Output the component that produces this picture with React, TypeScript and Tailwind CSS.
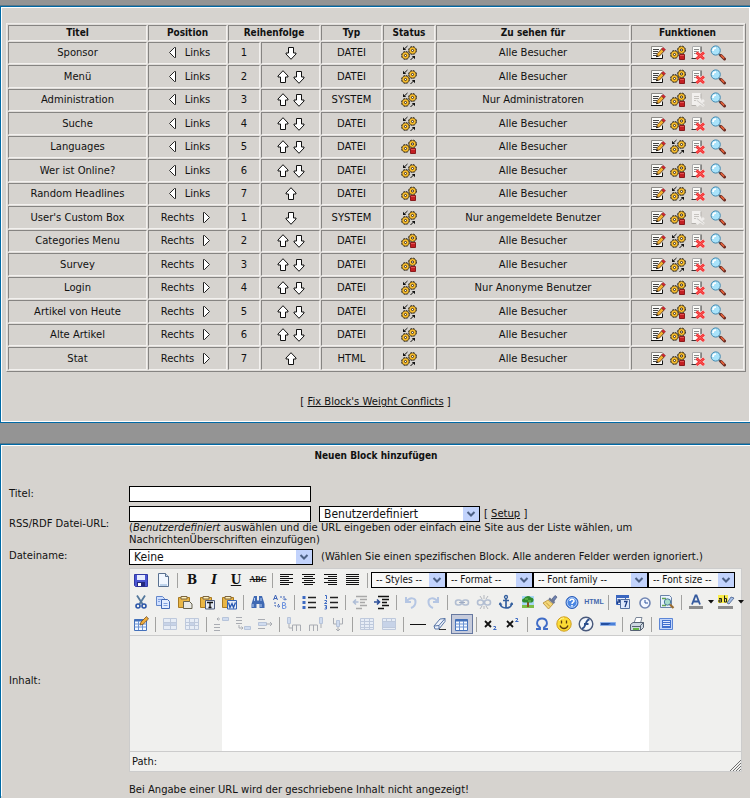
import type { ReactNode } from 'react';

type Block = {
  title: string;
  side: 'Links' | 'Rechts';
  weight: number;
  up: boolean;
  down: boolean;
  type: 'DATEI' | 'SYSTEM' | 'HTML';
  active: boolean;
  visibility: string;
};

const blocks: Block[] = [
  { title: 'Sponsor', side: 'Links', weight: 1, up: false, down: true, type: 'DATEI', active: true, visibility: 'Alle Besucher' },
  { title: 'Menü', side: 'Links', weight: 2, up: true, down: true, type: 'DATEI', active: true, visibility: 'Alle Besucher' },
  { title: 'Administration', side: 'Links', weight: 3, up: true, down: true, type: 'SYSTEM', active: true, visibility: 'Nur Administratoren' },
  { title: 'Suche', side: 'Links', weight: 4, up: true, down: true, type: 'DATEI', active: true, visibility: 'Alle Besucher' },
  { title: 'Languages', side: 'Links', weight: 5, up: true, down: true, type: 'DATEI', active: false, visibility: 'Alle Besucher' },
  { title: 'Wer ist Online?', side: 'Links', weight: 6, up: true, down: true, type: 'DATEI', active: true, visibility: 'Alle Besucher' },
  { title: 'Random Headlines', side: 'Links', weight: 7, up: true, down: false, type: 'DATEI', active: false, visibility: 'Alle Besucher' },
  { title: "User's Custom Box", side: 'Rechts', weight: 1, up: false, down: true, type: 'SYSTEM', active: true, visibility: 'Nur angemeldete Benutzer' },
  { title: 'Categories Menu', side: 'Rechts', weight: 2, up: true, down: true, type: 'DATEI', active: false, visibility: 'Alle Besucher' },
  { title: 'Survey', side: 'Rechts', weight: 3, up: true, down: true, type: 'DATEI', active: false, visibility: 'Alle Besucher' },
  { title: 'Login', side: 'Rechts', weight: 4, up: true, down: true, type: 'DATEI', active: true, visibility: 'Nur Anonyme Benutzer' },
  { title: 'Artikel von Heute', side: 'Rechts', weight: 5, up: true, down: true, type: 'DATEI', active: true, visibility: 'Alle Besucher' },
  { title: 'Alte Artikel', side: 'Rechts', weight: 6, up: true, down: true, type: 'DATEI', active: true, visibility: 'Alle Besucher' },
  { title: 'Stat', side: 'Rechts', weight: 7, up: true, down: false, type: 'HTML', active: true, visibility: 'Alle Besucher' },
];

const Icon = ({ children }: { children: ReactNode }) => (
  <svg viewBox="0 0 16 16" className="block h-4 w-4 shrink-0" fill="none" aria-hidden="true">
    {children}
  </svg>
);

/* ---------- Block list icons ---------- */

const Gear = ({ cx, cy }: { cx: number; cy: number }) => (
  <g transform={`translate(${cx} ${cy})`}>
    <circle r="3.9" stroke="#1f1a12" strokeWidth="1" strokeDasharray="2 1.060" />
    <circle r="3.5" fill="#ffc22e" stroke="#3b2d12" strokeWidth=".6" />
    <circle r="1.100" fill="#fff" stroke="#2a2013" strokeWidth=".9" />
  </g>
);

const GearsOn = () => (
  <Icon>
    <Gear cx={4.5} cy={10.500} />
    <Gear cx={11.5} cy={5.5} />
    <path d="M6.500 1 3.500 3.800" stroke="#111" />
    <path d="M2 5V1.800L5.200 5z" fill="#111" />
    <path d="m9.500 15 3-3" stroke="#111" />
    <path d="M14 11v3.200L10.800 11z" fill="#111" />
  </Icon>
);

const GearsOff = () => (
  <Icon>
    <Gear cx={4.5} cy={9.5} />
    <Gear cx={11.5} cy={5} />
    <path d="M9.500 9.500h5v5h-5z" fill="#c41f22" stroke="#8a1a1d" />
    <path d="M10 10.500h4" stroke="#e25252" />
  </Icon>
);

const ArrowUp = () => (
  <Icon>
    <path d="M8 1.7 13 7v1h-2.500v5.500h-5V8H3V7z" fill="#fff" stroke="#111" />
  </Icon>
);

const ArrowDown = () => (
  <Icon>
    <path d="M8 14.300 13 9V8h-2.500V2.500h-5V8H3v1z" fill="#fff" stroke="#111" />
  </Icon>
);

const TriangleLeft = () => (
  <Icon>
    <path d="M10.500 2.500v10h-1l-5-5 5-5z" fill="#fff" stroke="#222" />
  </Icon>
);

const TriangleRight = () => (
  <Icon>
    <path d="M5.500 2.500v10h1l5-5-5-5z" fill="#fff" stroke="#222" />
  </Icon>
);

const EditIcon = () => (
  <Icon>
    <path d="M2 2h10v11H2z" fill="#fbfbf8" />
    <path d="M1.500 13.500v-12h11" stroke="#8d8b87" />
    <path d="M1 13.500h11.500v-4" stroke="#111" />
    <path d="M3 4.500h6M3 6.500h5M3 8.500h4M3 10.500h3" stroke="#444" />
    <path d="m6.500 11.500.7-2.800L11.500 4l2.500 2.200L9.500 11z" fill="#f4b32f" stroke="#4b2813" strokeWidth=".8" />
    <path d="m11.500 4 1.500-1.600 2.500 2.200-1.500 1.600z" fill="#d6252e" stroke="#7e1a1c" strokeWidth=".5" />
    <path d="m6 12.200.6-2.200 1.600 1.500z" fill="#111" />
  </Icon>
);

const DeleteIcon = () => (
  <Icon>
    <path d="M2 1h9v12H2z" fill="#fbfbf8" />
    <path d="M2.500 13V1.500h8" stroke="#aaa" />
    <path d="M11 1.500v6M1.500 13.500h6" stroke="#333" />
    <path d="M4 4.500h5M4 6.500h5M4 8.500h3" stroke="#888" />
    <path d="m6.500 7.500 7.500 6.500M14 7.500 6.500 14" stroke="#fbd9d7" strokeWidth="3.800" />
    <path d="m6.500 7.500 7.500 6.500M14 7.500 6.500 14" stroke="#f0292b" strokeWidth="2.800" />
    <path d="m7 8 6.500 5.500M13.500 8 7 13.500" stroke="#ff7a75" strokeWidth=".7" />
  </Icon>
);

const DeleteDisabledIcon = () => (
  <Icon>
    <path d="M2 1h9v12H2z" fill="#f2f0ee" />
    <path d="M4 4.500h5M4 6.500h5M4 8.500h3" stroke="#c6c3bf" />
    <path d="M1.500 13.500h6M11 1.500v5" stroke="#b3b0ac" />
    <path d="m6.500 8 7.500 6M14 8l-7.500 6" stroke="#efedeb" strokeWidth="2.800" />
    <path d="m7 8.500 6.500 5" stroke="#c2bfbb" strokeWidth=".8" />
  </Icon>
);

const ViewIcon = () => (
  <Icon>
    <path d="m9 9 2 2" stroke="#555" strokeWidth="2" />
    <path d="m11 10.500 3.500 3.500" stroke="#6a2a20" strokeWidth="3" strokeLinecap="round" />
    <path d="m11 10.200 3.200 3.200" stroke="#e8623a" strokeWidth="1.600" />
    <circle cx="5.700" cy="5.500" r="4.600" fill="#a9e3fa" stroke="#4389b1" />
    <path d="M3 6a3 3 0 0 1 3-3" stroke="#fff" strokeWidth="1.600" />
  </Icon>
);

/* ---------- Editor toolbar icons ---------- */

const SaveIcon = () => (
  <Icon>
    <path d="M1.500 2.500h13v12h-12l-1-1z" fill="#4a55d2" stroke="#3038a4" />
    <path d="M4 3h8v5H4z" fill="#e6ecff" />
    <path d="M4 10h8v4.500H4z" fill="#24297c" />
    <path d="M5 11h3v3H5z" fill="#fff" />
  </Icon>
);

const PageIcon = () => (
  <Icon>
    <path d="M3.500 1.500h7l3 3v10h-10z" fill="#f1f7ff" stroke="#5a7190" />
    <path d="M10.500 1.500v3h3" fill="#c5d9ee" stroke="#5a7190" />
    <path d="M5 13h7" stroke="#bdd3ec" strokeWidth="2" />
  </Icon>
);

const AlignIcon = ({ d }: { d: string }) => (
  <Icon>
    <path d={d} stroke="#111" />
  </Icon>
);

const CutIcon = () => (
  <Icon>
    <path d="M4 1.500 9.500 10M12 1.500 6.500 10" stroke="#54789c" strokeWidth="1.800" />
    <circle cx="5" cy="12" r="2" stroke="#2b55a8" strokeWidth="1.600" />
    <circle cx="11" cy="12" r="2" stroke="#2b55a8" strokeWidth="1.600" />
  </Icon>
);

const CopyIcon = () => (
  <Icon>
    <path d="M1.500 2.500h6l2 2v7h-8z" fill="#cfdfff" stroke="#6386ca" />
    <path d="M6.500 5.500h6l2 2v7h-8z" fill="#e2ecff" stroke="#4067b4" />
    <path d="M3 5.500h3M3 7.500h2M8.500 9.500h4M8.500 11.500h4" stroke="#7fa1e0" />
  </Icon>
);

const PasteIcon = ({ children }: { children?: ReactNode }) => (
  <Icon>
    <path d="M1.500 3.500h11v10h-11z" fill="#e9b646" stroke="#a87a22" />
    <path d="M4 2.500h6v2.500H4z" fill="#fff1ba" stroke="#7c6540" />
    {children}
  </Icon>
);

const FindIcon = () => (
  <Icon>
    <path d="M4 2h3v4l1 1 1-1V2h3l2.500 8v4H9.500v-4h-3v4h-5v-4z" fill="#3f69b3" />
    <path d="M4.500 4v3M11 4v3M3 10v3M11 10v3" stroke="#b6cff4" />
  </Icon>
);

const ReplaceIcon = () => (
  <Icon>
    <path d="m1.500 6 2-5 2 5M2 4.500h3" stroke="#3f65b8" />
    <path d="M10.500 8.500v6h2a1.500 1.500 0 0 0 0-3h-2 1.500a1.500 1.500 0 0 0 0-3z" stroke="#6d93df" />
    <path d="M8 3h5v3M11 4.500l2 2 2-2" stroke="#3f65b8" strokeDasharray="2 1" />
    <path d="M3 8v4h5M6 10l2 2-2 2" stroke="#3f65b8" strokeDasharray="2 1" />
  </Icon>
);

const BulletIcon = () => (
  <Icon>
    <path d="M1.500 2h3v3h-3zM1.500 7h3v3h-3zM1.500 12h3v3h-3z" fill="#3d6ac2" />
    <path d="M7 3.500h8M7 8.500h8M7 13.500h8" stroke="#222" strokeWidth="1.400" />
  </Icon>
);

const NumberIcon = () => (
  <Icon>
    <path d="M2 1.500h1.500V5M1.500 6.500h2v1.500l-2 1.500h2.500M1.500 11.500h2V15h-2M2 13.200h1.500" stroke="#3d6ac2" />
    <path d="M7 3.500h8M7 8.500h8M7 13.500h8" stroke="#222" strokeWidth="1.400" />
  </Icon>
);

const IndentIcon = ({ right }: { right?: boolean }) => (
  <Icon>
    <path d="M4 2.500h11M8 5.500h7M8 8.500h5M8 11.500h7M4 14.500h6" stroke={right ? '#111' : '#a8a8a8'} strokeWidth="1.500" />
    {right ? (
      <path d="M0 8h5M3 5.500 5.500 8 3 10.500" stroke="#2c4f99" strokeWidth="1.600" />
    ) : (
      <path d="M6.500 8h-5M4 5.500 1.500 8 4 10.500" stroke="#aebdd6" strokeWidth="1.600" />
    )}
  </Icon>
);

const UndoIcon = () => (
  <Icon>
    <path d="M3 3v5h5M3.500 7.500C7 2.500 13 4 12.500 8c0 3-2 5-4.500 6" stroke="#b5c6e3" strokeWidth="2" />
  </Icon>
);

const RedoIcon = () => (
  <Icon>
    <path d="M13 3v5H8M12.500 7.500C9 2.500 3 4 3.500 8c0 3 2 5 4.500 6" stroke="#b5c6e3" strokeWidth="2" />
  </Icon>
);

const LinkIcon = ({ broken }: { broken?: boolean }) => (
  <Icon>
    <rect x="1.500" y="6" width="6" height="5" rx="2.500" stroke="#b2bed2" strokeWidth="1.600" />
    <rect x="8.500" y="6" width="6" height="5" rx="2.500" stroke="#b2bed2" strokeWidth="1.600" />
    {broken ? (
      <path d="M8 1v4M8 12v3M4 2l2 3M12 2l-2 3M4 15l2-3M12 15l-2-3" stroke="#b2b6bd" />
    ) : (
      <path d="M5 8.500h6" stroke="#9fabc2" />
    )}
  </Icon>
);

const AnchorIcon = () => (
  <Icon>
    <circle cx="8" cy="3" r="1.500" stroke="#35609f" strokeWidth="1.300" />
    <path d="M8 4.500V14M5 6.500h6M2 9c.5 3.500 3 5 6 5s5.500-1.500 6-5" stroke="#35609f" strokeWidth="1.700" />
    <path d="M.8 11 2 8l2.500 2.500zM15.200 11 14 8l-2.500 2.500z" fill="#35609f" />
  </Icon>
);

const ImageIcon = () => (
  <Icon>
    <path d="M2 2h12v12H2z" fill="#a9d6f5" />
    <path d="M2 11h12v3H2z" fill="#7cbd45" />
    <path d="M7 8h2v5H7z" fill="#8a4f20" />
    <path d="M4 8.500a2 2 0 0 1 0-4 4 3.500 0 0 1 7-1 2.600 2.600 0 0 1 1 5z" fill="#2f8a2e" />
    <path d="M5 5h3M8 7h3" stroke="#79c850" />
  </Icon>
);

const CleanupIcon = () => (
  <Icon>
    <path d="m10 5 3-3.500 2 1.500-3 4z" fill="#6b7fae" stroke="#4f5a80" strokeWidth=".7" />
    <path d="m6 6 5 4-4.500 5L1 9z" fill="#f4d879" stroke="#b38a32" strokeWidth=".8" />
    <path d="m7 4.500 5.500 4.500" stroke="#6c7690" strokeWidth="2.400" />
    <path d="m4 8.500 4 4" stroke="#c99b36" />
  </Icon>
);

const HelpIcon = () => (
  <Icon>
    <circle cx="8" cy="8.500" r="6" fill="#4a87e3" stroke="#2b5cb6" />
    <circle cx="8" cy="8.500" r="4.800" stroke="#c9defc" strokeWidth=".8" />
    <path d="M6 7c0-2.500 4-2.500 4 0 0 1.300-2 1.200-2 3M8 11v1.500" stroke="#fff" strokeWidth="1.500" />
  </Icon>
);

const DateIcon = () => (
  <Icon>
    <path d="M1.500 1.500h9v9h-9z" fill="#e9f0ff" stroke="#3a66bf" />
    <path d="M1 1h13v3H1z" fill="#3a66bf" />
    <path d="M5.500 5.500h9v9h-9z" fill="#dfe9fb" stroke="#55709f" />
    <path d="M9 7.500h3L10 13M2.500 6h2v2h-2v2" stroke="#1c3d86" strokeWidth="1.300" />
  </Icon>
);

const TimeIcon = () => (
  <Icon>
    <circle cx="8" cy="9" r="5" fill="#f3f7ff" stroke="#7186b3" strokeWidth="1.600" />
    <path d="M8 6v3h3" stroke="#2e559f" />
  </Icon>
);

const PreviewIcon = () => (
  <Icon>
    <path d="M1.500 1.500h9l2 2v10h-11z" fill="#e9f2ff" stroke="#6a83a8" />
    <path d="M3 4.500h4M3 11.500h4" stroke="#63a552" strokeWidth="1.500" />
    <circle cx="8.500" cy="8" r="3.200" fill="#a6dccb" stroke="#47779a" />
    <path d="m11 10.500 3.500 3.500" stroke="#9a6b2d" strokeWidth="2.200" />
  </Icon>
);

const ForeColorIcon = () => (
  <Icon>
    <path d="M4 10.500 7.500 1.500h1L12 10.500M5.500 7.500h5" stroke="#355a9e" strokeWidth="1.800" />
    <path d="M1 12h14v3H1z" fill="#8c8c8c" />
  </Icon>
);

const BackColorIcon = () => (
  <svg viewBox="0 0 18 16" className="block h-4 w-[18px] shrink-0" fill="none" aria-hidden="true">
    <path d="M1 1h10v8H1z" fill="#f9ec4a" />
    <path d="M2 4.500h2.500V8H2V6h2M7.500 1.500V8h2V4.500h-2" stroke="#222" />
    <path d="m10 9 4-6 3 1-5 6z" fill="#a7c0e6" stroke="#47608e" strokeWidth=".8" />
    <path d="M1 12h15v3H1z" fill="#8c8c8c" />
  </svg>
);

const TableIcon = ({ pencil }: { pencil?: boolean }) => (
  <Icon>
    <path d="M1.500 3.500h12v11h-12z" fill="#f5f9ff" stroke="#4370ba" />
    <path d="M1.500 4.500h12" stroke="#4370ba" strokeWidth="2" />
    <path d="M1.500 8h12M1.500 11h12M5.500 5v9M9.500 5v9" stroke="#6b93d4" />
    {pencil && <path d="m7 9 1-3 5.500-5.500L15.500 3 10 8.300z" fill="#efac3a" stroke="#765023" strokeWidth=".8" />}
  </Icon>
);

const FadedTableIcon = ({ d, fill }: { d: string; fill?: string }) => (
  <Icon>
    <path d="M1.500 2.500h13v11h-13z" fill="#e7edf6" stroke="#bec9dc" />
    {fill && <path d={fill} fill="#c7d3e8" />}
    <path d={d} stroke="#bec9dc" />
  </Icon>
);

const FadedIcon = ({ box, line }: { box: string; line: string }) => (
  <Icon>
    <path d={box} fill="#d0dcef" stroke="#b7c4da" />
    <path d={line} stroke="#a9acb2" />
  </Icon>
);

const RuleIcon = () => (
  <Icon>
    <path d="M0 8.500h16" stroke="#111" />
  </Icon>
);

const EraserIcon = () => (
  <Icon>
    <path d="m2 10 6-7 5-.5v3L7 13H3z" fill="#eef3fb" stroke="#5875a6" />
    <path d="m2 10 5-.5 6-7M7 9.500V13" stroke="#5875a6" />
    <path d="M7 13.500h7" stroke="#333" />
  </Icon>
);

const ScriptIcon = ({ sup }: { sup?: boolean }) => (
  <Icon>
    <path d="m2 5 6 6M8 5l-6 6" stroke="#111" strokeWidth="1.800" />
    <path d={sup ? 'M10.500 2.500h2v1.500l-2 1.500h3' : 'M10.500 10.500h2v1.500l-2 1.500h3'} stroke="#3d6ac2" />
  </Icon>
);

const OmegaIcon = () => (
  <Icon>
    <path d="M2 13h4v-1.500C1 8.500 3 2.500 8 2.500s7 6 2 9V13h4" stroke="#3f6cc7" strokeWidth="1.900" />
  </Icon>
);

const SmileIcon = () => (
  <Icon>
    <circle cx="8" cy="8" r="7.200" fill="#fbdc35" stroke="#cf9d1e" />
    <path d="M5.500 4.500v3M10.500 4.500v3M4 9.500c1.500 4 6.500 4 8 0" stroke="#5b3b0d" strokeWidth="1.300" />
    <path d="M3 5c1-2 3-3 5-3" stroke="#fff5a4" />
  </Icon>
);

const FlashIcon = () => (
  <Icon>
    <circle cx="8" cy="8" r="6.800" fill="#f3f6fb" stroke="#49597b" strokeWidth="1.400" />
    <path d="M11.500 3.500C7 3.500 8 12.500 4 12.500M6 8h4.500" stroke="#2b4f8e" strokeWidth="1.800" />
  </Icon>
);

const AdvRuleIcon = () => (
  <Icon>
    <path d="M.5 6.500h15v3H.5z" fill="#4a80d8" stroke="#8aaee8" />
    <path d="M1 9h7l3-2H1z" fill="#244f9f" />
  </Icon>
);

const PrintIcon = () => (
  <Icon>
    <path d="m5 7 2-5.500h6L11.500 7z" fill="#fff" stroke="#7b8798" />
    <path d="m1.500 8.500 2.500-2h10.500v5l-3 3h-10z" fill="#cdd7e1" stroke="#566273" />
    <path d="M3 10.500h8M11.500 14V9.500l3-3" stroke="#566273" />
    <path d="M4 12h6v2H4z" fill="#64b845" />
  </Icon>
);

const FullscreenIcon = () => (
  <Icon>
    <path d="M1.500 2.500h13v11h-13z" fill="#c3d6fa" stroke="#5c86d6" />
    <path d="M4 4h9v8H4z" fill="#3f6fce" />
    <path d="M5 5.500h7M5 7.500h7M5 9.500h7" stroke="#dfe9ff" />
  </Icon>
);

/* ---------- Toolbar building blocks ---------- */

const ToolButton = ({ label, active, children }: { label: string; active?: boolean; children: ReactNode }) => (
  <button
    type="button"
    title={label}
    aria-label={label}
    className={
      active
        ? 'flex h-5 w-[22px] shrink-0 items-center justify-center border border-[#6779a0] bg-[#c6cbdb]'
        : 'flex h-5 w-[22px] shrink-0 items-center justify-center'
    }
  >
    {children}
  </button>
);

const Separator = () => (
  <span className="flex w-[7px] shrink-0 justify-center">
    <span className="h-[15px] w-px bg-[#a2a2a0]" />
  </span>
);

const ColorArrow = ({ label }: { label: string }) => (
  <button type="button" aria-label={label} className="flex h-5 w-2 shrink-0 items-center justify-center">
    <svg viewBox="0 0 6 4" className="h-1 w-[6px]" aria-hidden="true">
      <path d="M0 0h6L3 3.500z" fill="#111" />
    </svg>
  </button>
);

const Chevron = () => (
  <span className="pointer-events-none absolute inset-y-px right-px flex w-4 items-center justify-center bg-[#c2d3fc]">
    <svg viewBox="0 0 10 8" className="h-2 w-[10px]" fill="none" aria-hidden="true">
      <path d="m1.500 2 3.500 3.500L8.500 2" stroke="#4d6185" strokeWidth="2" />
    </svg>
  </span>
);

const toolSelects = [
  { label: '-- Styles --', width: 'w-[75px]' },
  { label: '-- Format --', width: 'w-[87px]' },
  { label: '-- Font family --', width: 'w-[115px]' },
  { label: '-- Font size --', width: 'w-[87px]' },
];

const boldFont = "font-['DejaVu_Sans_Condensed','DejaVu_Sans',sans-serif] font-bold";
const cell = 'border border-t-[#868482] border-l-[#868482] border-r-[#f3f1ef] border-b-[#f3f1ef] p-0 text-center';
const headCell = `${cell} ${boldFont}`;

const BlockTable = () => (
  <table className="w-full table-fixed border-separate border-spacing-px border border-t-[#efedeb] border-l-[#efedeb] border-r-[#868482] border-b-[#868482] bg-[#e0ddda]">
    <colgroup>
      <col className="w-[139px]" />
      <col className="w-[79px]" />
      <col className="w-[32px]" />
      <col className="w-[59px]" />
      <col className="w-[61px]" />
      <col className="w-[52px]" />
      <col className="w-[194px]" />
      <col className="w-[113px]" />
    </colgroup>
    <thead>
      <tr className="h-4 bg-[#d6d3cf]">
        <th className={headCell}>Titel</th>
        <th className={headCell}>Position</th>
        <th className={headCell} colSpan={2}>Reihenfolge</th>
        <th className={headCell}>Typ</th>
        <th className={headCell}>Status</th>
        <th className={headCell}>Zu sehen für</th>
        <th className={headCell}>Funktionen</th>
      </tr>
    </thead>
    <tbody>
      {blocks.map((block) => (
        <tr key={block.title} className="bg-[#d6d3cf] odd:h-[22px] even:h-[23px]">
          <td className={cell}>{block.title}</td>
          <td className={cell}>
            <span className="flex items-center justify-center gap-1">
              {block.side === 'Links' && <TriangleLeft />}
              <span>{block.side}</span>
              {block.side === 'Rechts' && <TriangleRight />}
            </span>
          </td>
          <td className={cell}>{block.weight}</td>
          <td className={cell}>
            <span className="flex items-center justify-center">
              {block.up && <a href="#up" aria-label="Nach oben"><ArrowUp /></a>}
              {block.down && <a href="#down" aria-label="Nach unten"><ArrowDown /></a>}
            </span>
          </td>
          <td className={cell}>{block.type}</td>
          <td className={cell}>
            <span className="flex justify-center">{block.active ? <GearsOn /> : <GearsOff />}</span>
          </td>
          <td className={cell}>{block.visibility}</td>
          <td className={cell}>
            <span className="flex items-center justify-center gap-[4px]">
              <a href="#edit" aria-label="Bearbeiten"><EditIcon /></a>
              <a href="#toggle" aria-label="Status ändern">{block.active ? <GearsOff /> : <GearsOn />}</a>
              {block.type === 'SYSTEM' ? <DeleteDisabledIcon /> : <a href="#delete" aria-label="Löschen"><DeleteIcon /></a>}
              <a href="#show" aria-label="Anzeigen"><ViewIcon /></a>
            </span>
          </td>
        </tr>
      ))}
    </tbody>
  </table>
);

const Editor = () => (
  <div className="border border-[#cccccc] bg-[#f0f0ee]">
    <div className="flex h-[22px] items-center">
      <ToolButton label="Speichern"><SaveIcon /></ToolButton>
      <ToolButton label="Neues Dokument"><PageIcon /></ToolButton>
      <Separator />
      <ToolButton label="Fett"><b className="font-['DejaVu_Serif',serif] text-[12px]">B</b></ToolButton>
      <ToolButton label="Kursiv"><i className="font-['DejaVu_Serif',serif] text-[12px] font-bold">I</i></ToolButton>
      <ToolButton label="Unterstrichen"><u className="font-['DejaVu_Serif',serif] text-[12px] font-bold">U</u></ToolButton>
      <ToolButton label="Durchgestrichen"><s className="font-['Liberation_Serif',serif] text-[8px] font-bold">ABC</s></ToolButton>
      <Separator />
      <ToolButton label="Linksbündig"><AlignIcon d="M1 2.500h13M1 4.500h9M1 6.500h13M1 8.500h9M1 10.500h13M1 12.500h9" /></ToolButton>
      <ToolButton label="Zentriert"><AlignIcon d="M1 2.500h13M3 4.500h9M1 6.500h13M3 8.500h9M1 10.500h13M3 12.500h9" /></ToolButton>
      <ToolButton label="Rechtsbündig"><AlignIcon d="M1 2.500h13M5 4.500h9M1 6.500h13M5 8.500h9M1 10.500h13M5 12.500h9" /></ToolButton>
      <ToolButton label="Blocksatz"><AlignIcon d="M1 2.500h13M1 4.500h13M1 6.500h13M1 8.500h13M1 10.500h13M1 12.500h13" /></ToolButton>
      <Separator />
      {toolSelects.map((item) => (
        <span key={item.label} className={`relative h-4 shrink-0 ${item.width}`}>
          <select aria-label={item.label} className="block h-4 w-full appearance-none border border-black bg-[#f8f8f7] pl-1 font-['DejaVu_Sans_Condensed','DejaVu_Sans',sans-serif] text-[10px] leading-[14px]">
            <option>{item.label}</option>
          </select>
          <Chevron />
        </span>
      ))}
    </div>
    <div className="flex h-[22px] items-center">
      <ToolButton label="Ausschneiden"><CutIcon /></ToolButton>
      <ToolButton label="Kopieren"><CopyIcon /></ToolButton>
      <ToolButton label="Einfügen">
        <PasteIcon>
          <path d="M6.500 7.500h6l2.500 2.500v4.500H6.500z" fill="#e9e9e5" stroke="#66624f" />
        </PasteIcon>
      </ToolButton>
      <ToolButton label="Als Text einfügen">
        <PasteIcon>
          <path d="M6.500 6.500h9v8.500h-9z" fill="#e5ebf6" stroke="#4d5b7c" />
          <path d="M8 8.500h6M11 8.500v5M9.500 13.500h3" stroke="#111" strokeWidth="1.300" />
        </PasteIcon>
      </ToolButton>
      <ToolButton label="Aus Word einfügen">
        <PasteIcon>
          <path d="M6.500 6.500h9v8.500h-9z" fill="#e5ebf6" stroke="#3563b5" />
          <path d="m7.500 8.500 1.500 5 2-4 1.500 4 2-5" stroke="#2456b1" strokeWidth="1.300" />
        </PasteIcon>
      </ToolButton>
      <Separator />
      <ToolButton label="Suchen"><FindIcon /></ToolButton>
      <ToolButton label="Ersetzen"><ReplaceIcon /></ToolButton>
      <Separator />
      <ToolButton label="Aufzählung"><BulletIcon /></ToolButton>
      <ToolButton label="Nummerierung"><NumberIcon /></ToolButton>
      <Separator />
      <ToolButton label="Ausrücken"><IndentIcon /></ToolButton>
      <ToolButton label="Einrücken"><IndentIcon right /></ToolButton>
      <Separator />
      <ToolButton label="Rückgängig"><UndoIcon /></ToolButton>
      <ToolButton label="Wiederholen"><RedoIcon /></ToolButton>
      <Separator />
      <ToolButton label="Link einfügen"><LinkIcon /></ToolButton>
      <ToolButton label="Link entfernen"><LinkIcon broken /></ToolButton>
      <ToolButton label="Anker"><AnchorIcon /></ToolButton>
      <ToolButton label="Bild"><ImageIcon /></ToolButton>
      <ToolButton label="Code aufräumen"><CleanupIcon /></ToolButton>
      <ToolButton label="Hilfe"><HelpIcon /></ToolButton>
      <ToolButton label="HTML-Quelltext">
        <span className="font-['Liberation_Sans',sans-serif] text-[7px] font-bold text-[#4468ad]">HTML</span>
      </ToolButton>
      <Separator />
      <ToolButton label="Datum einfügen"><DateIcon /></ToolButton>
      <ToolButton label="Zeit einfügen"><TimeIcon /></ToolButton>
      <ToolButton label="Vorschau"><PreviewIcon /></ToolButton>
      <Separator />
      <ToolButton label="Textfarbe"><ForeColorIcon /></ToolButton>
      <ColorArrow label="Textfarbe wählen" />
      <ToolButton label="Hintergrundfarbe"><BackColorIcon /></ToolButton>
      <ColorArrow label="Hintergrundfarbe wählen" />
    </div>
    <div className="flex h-[22px] items-center">
      <ToolButton label="Tabelle"><TableIcon pencil /></ToolButton>
      <Separator />
      <ToolButton label="Zeileneigenschaften"><FadedTableIcon d="M1 6.500h14M1 9.500h14M8.500 3v10" fill="M2 7h12v2H2z" /></ToolButton>
      <ToolButton label="Zelleneigenschaften"><FadedTableIcon d="M1 6.500h14M1 9.500h14M5.500 3v10M10.500 3v10" fill="M6 7h4v2H6z" /></ToolButton>
      <Separator />
      <ToolButton label="Zeile davor"><FadedIcon box="M9.500 1.500h6v3h-6z" line="M7 3H4M5.500 1.500 4 3l1.500 1.500M1 8.500h6M1 11.500h6M1 14.500h6" /></ToolButton>
      <ToolButton label="Zeile danach"><FadedIcon box="M9.500 10.500h6v3h-6z" line="M1 1.500h6M1 4.500h6M1 7.500h6M4 9v3h4M6.500 10.500 8 12l-1.500 1.500" /></ToolButton>
      <ToolButton label="Zeile löschen"><FadedIcon box="M1.500 6.500h8v3h-8z" line="M1 3.500h7M1 12.500h7M9 8h6M13 6l2 2-2 2" /></ToolButton>
      <Separator />
      <ToolButton label="Spalte davor"><FadedIcon box="M1.500 1.500h3v6h-3z" line="M3 8v4h3M6.500 15V9h8v6M10.500 9v6" /></ToolButton>
      <ToolButton label="Spalte danach"><FadedIcon box="M11.500 1.500h3v6h-3z" line="M13 8v4M1.500 15V9h8v6M5.500 9v6" /></ToolButton>
      <ToolButton label="Spalte löschen"><FadedIcon box="M6.500 4.500h3v6h-3z" line="M3.500 2v6h3M12.500 2v6h-3M8 11v4M6 13l2 2 2-2" /></ToolButton>
      <Separator />
      <ToolButton label="Zellen teilen"><FadedTableIcon d="M1 5.500h14M1 8.500h14M1 11.500h14M5.500 3v10M10.500 3v10" /></ToolButton>
      <ToolButton label="Zellen verbinden"><FadedTableIcon d="M1 5.500h14M1 11.500h14M5.500 3v3M10.500 3v3" fill="M2 6h12v5H2z" /></ToolButton>
      <Separator />
      <ToolButton label="Linie"><RuleIcon /></ToolButton>
      <ToolButton label="Formatierung entfernen"><EraserIcon /></ToolButton>
      <ToolButton label="Hilfslinien" active><TableIcon /></ToolButton>
      <Separator />
      <ToolButton label="Tiefgestellt"><ScriptIcon /></ToolButton>
      <ToolButton label="Hochgestellt"><ScriptIcon sup /></ToolButton>
      <Separator />
      <ToolButton label="Sonderzeichen"><OmegaIcon /></ToolButton>
      <ToolButton label="Smiley"><SmileIcon /></ToolButton>
      <ToolButton label="Flash"><FlashIcon /></ToolButton>
      <ToolButton label="Trennlinie"><AdvRuleIcon /></ToolButton>
      <Separator />
      <ToolButton label="Drucken"><PrintIcon /></ToolButton>
      <Separator />
      <ToolButton label="Vollbild"><FullscreenIcon /></ToolButton>
    </div>
    <div className="flex justify-center border-y border-[#cccccc]">
      <textarea id="content" className="block h-[115px] w-[70%] resize-none bg-white" />
    </div>
    <div className="flex h-[19px] items-center justify-between pl-[2px]">
      <span className="font-['DejaVu_Sans_Condensed','DejaVu_Sans',sans-serif] text-[11px]">Path:</span>
      <svg viewBox="0 0 12 12" className="h-3 w-3 self-end" fill="none" aria-hidden="true">
        <path d="M1 12 12 1M4 12l8-8M7 12l5-5M10 12l2-2" stroke="#6f6f6f" />
      </svg>
    </div>
  </div>
);

const textInput = 'block h-4 w-[182px] border border-black bg-white px-1 text-[11px]';
const selectBox = "block h-4 w-full appearance-none border border-black bg-white pl-1 font-['DejaVu_Sans_Condensed','DejaVu_Sans',sans-serif] text-[12px] leading-[14px]";

const AddBlockForm = () => (
  <form className="grid grid-cols-[120px_minmax(0,1fr)] items-center pt-6 pr-2 pl-[7px]">
    <label htmlFor="title">Titel:</label>
    <input id="title" type="text" className={textInput} />

    <label htmlFor="url">RSS/RDF Datei-URL:</label>
    <div className="pt-1">
      <div className="flex items-center gap-2">
        <input id="url" type="text" className={textInput} />
        <span className="relative w-[161px]">
          <select aria-label="Quelle" className={selectBox}>
            <option>Benutzerdefiniert</option>
          </select>
          <Chevron />
        </span>
        <span className="-ml-1">[ <a href="#setup" className="underline">Setup</a> ]</span>
      </div>
      <p className="max-w-[540px]">
        (<i>Benutzerdefiniert</i> auswählen und die URL eingeben oder einfach eine Site aus der Liste wählen, um NachrichtenÜberschriften einzufügen)
      </p>
    </div>

    <label htmlFor="file">Dateiname:</label>
    <div className="flex items-center gap-2 pt-[3px]">
      <span className="relative w-[184px] shrink-0">
        <select id="file" className={selectBox}>
          <option>Keine</option>
        </select>
        <Chevron />
      </span>
      <span>(Wählen Sie einen spezifischen Block. Alle anderen Felder werden ignoriert.)</span>
    </div>

    <label htmlFor="content">Inhalt:</label>
    <div className="pt-[3px]">
      <Editor />
      <p className="pt-3">Bei Angabe einer URL wird der geschriebene Inhalt nicht angezeigt!</p>
    </div>
  </form>
);

const App = () => (
  <div className="flex min-h-screen flex-col bg-[#949494] font-['DejaVu_Sans',sans-serif] text-[10px] leading-[12px] text-[#111]">
    <div className="h-[5px]" />
    <section className="border-t border-[#5c7788]">
      <div className="border border-r-0 border-[#0069a5] bg-[#d6d3cf]">
        <div className="border border-white px-[4px] pt-[15px] pb-[13px]">
          <BlockTable />
          <p className="pt-6 text-center">
            [ <a href="#fix" className="underline">Fix Block's Weight Conflicts</a> ]
          </p>
        </div>
      </div>
    </section>
    <div className="h-5" />
    <section className="flex flex-1 flex-col border-t border-[#5c7788]">
      <div className="flex-1 border-t border-l border-[#0069a5] bg-[#d6d3cf]">
        <div className="h-full border-t border-l border-white">
          <h2 className={`pt-[4px] text-center ${boldFont}`}>Neuen Block hinzufügen</h2>
          <AddBlockForm />
        </div>
      </div>
    </section>
  </div>
);

export default App;
